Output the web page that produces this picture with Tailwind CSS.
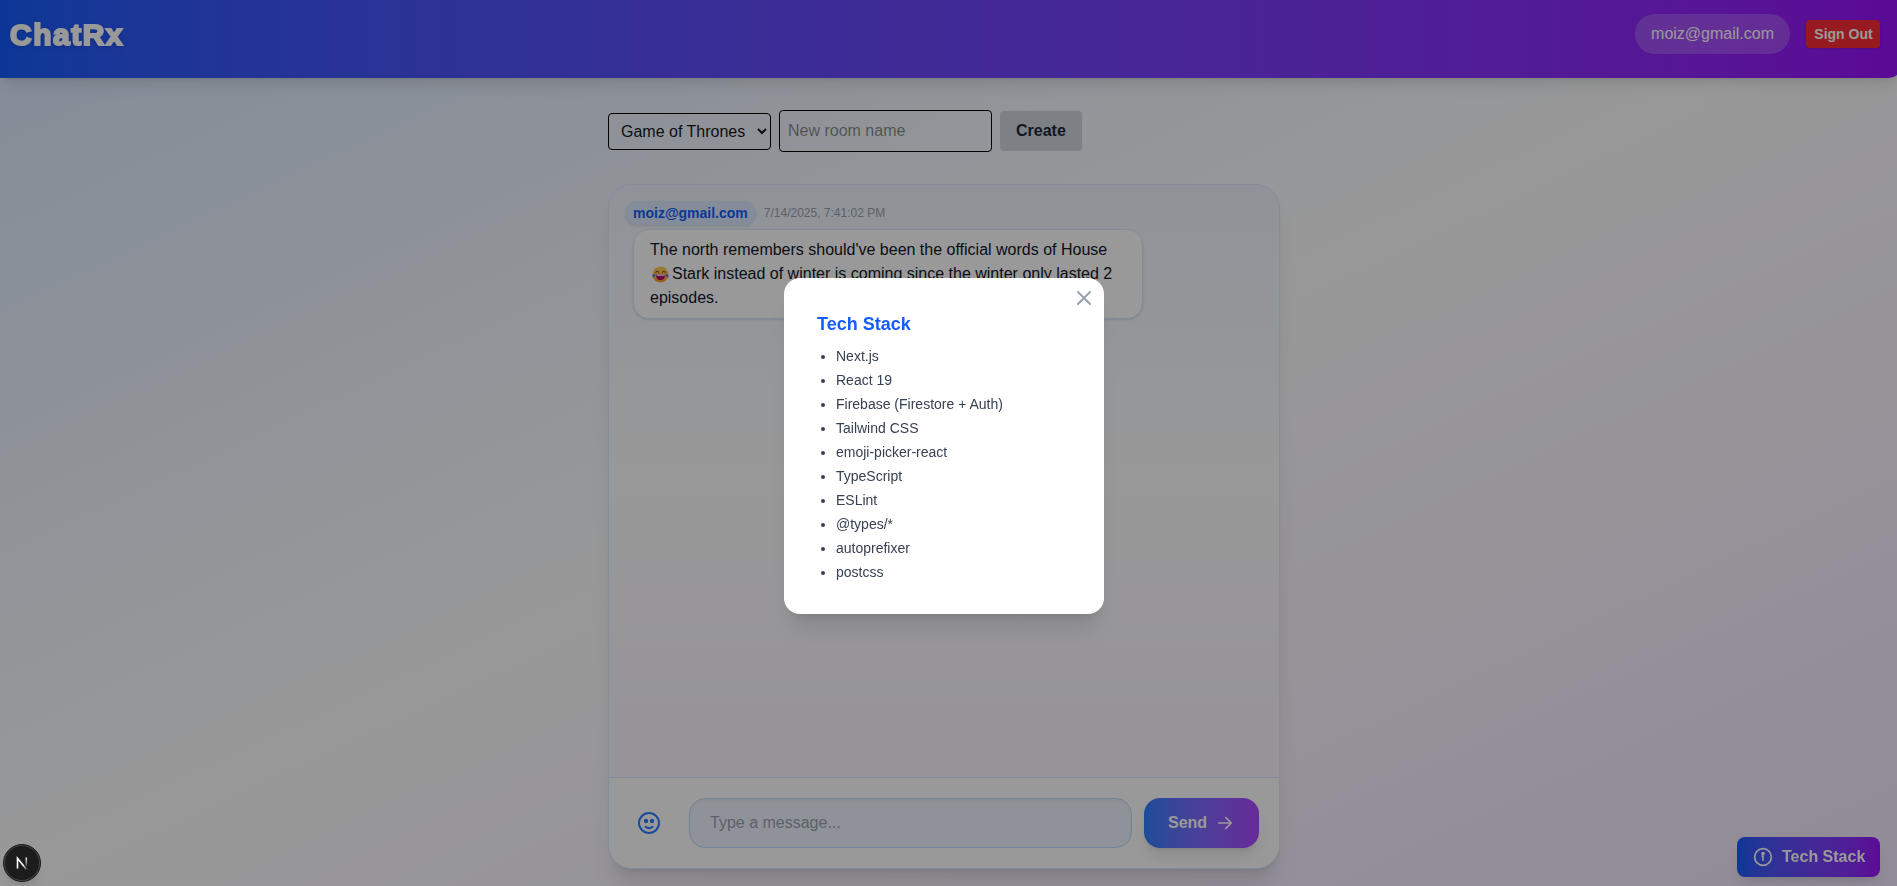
<!DOCTYPE html>
<html lang="en">
<head>
<meta charset="utf-8">
<title>ChatRx</title>
<script src="https://cdn.jsdelivr.net/npm/@tailwindcss/browser@4"></script>
</head>
<body class="h-screen overflow-hidden bg-linear-to-br from-blue-100 via-white to-purple-100 font-['Liberation_Sans',Arial,sans-serif] text-[#171717]">
<div class="flex h-full flex-col">
  <header class="flex h-[78px] w-[1901px] shrink-0 items-center justify-between rounded-br-xl bg-linear-to-r from-blue-600 to-purple-600 pl-[10px] pr-[21px] pb-[10px] text-white shadow-lg">
    <h1 class="pt-[2px] text-3xl font-black tracking-[1.5px] [-webkit-text-stroke:2px_white] drop-shadow-sm">ChatRx</h1>
    <div class="flex items-center gap-4">
      <span class="rounded-full bg-white/20 px-4 py-2">moiz@gmail.com</span>
      <button class="w-[74px] rounded bg-red-500 py-1 pl-px text-sm font-bold whitespace-nowrap shadow">Sign Out</button>
    </div>
  </header>
  <main class="flex w-[1888px] flex-1 flex-col items-center pt-8">
    <div class="flex h-[42px] w-2xl items-center gap-2">
      <select class="mt-px h-[37px] w-[163px] rounded border border-black px-2"><option>Game of Thrones</option></select>
      <input class="h-[42px] w-[213px] rounded border border-black p-2 placeholder:text-[#171717]/50" placeholder="New room name">
      <button class="h-10 rounded bg-gray-300 px-4 font-bold text-gray-800">Create</button>
    </div>
    <section class="mt-8 flex h-[685px] w-2xl flex-col overflow-hidden rounded-3xl border border-blue-100 bg-white shadow-xl">
      <div class="flex-1 bg-linear-to-b from-blue-50 via-white to-purple-50 p-4">
        <div class="flex items-center gap-2">
          <span class="flex h-6 items-center rounded-full bg-blue-100 px-2 text-sm font-bold text-blue-600 shadow-sm">moiz@gmail.com</span>
          <span class="text-xs text-gray-400">7/14/2025, 7:41:02 PM</span>
        </div>
        <div class="mt-1 ml-2 w-[510px] rounded-2xl border border-blue-100 bg-white px-4 py-2 whitespace-nowrap text-gray-900 shadow-sm">
          <p>The north remembers should've been the official words of House</p>
          <p class="flex items-center"><svg class="mr-[3px] ml-0.5 size-[17px]" viewBox="0 0 18 18"><defs><linearGradient id="face" x1="0" y1="0" x2="0" y2="1"><stop offset="0" stop-color="#ffd45a"/><stop offset="1" stop-color="#ff9b2e"/></linearGradient></defs><circle cx="9" cy="9" r="8.5" fill="url(#face)"/><path d="M3.900 6.500q1.700-2 3.300 0M10.800 6.500q1.700-2 3.300 0" fill="none" stroke="#5b2b1b" stroke-width="1" stroke-linecap="round"/><path d="M4 9h10q-.3 6-5 6t-5-6z" fill="#b00b69"/><path d="M4.500 9h9l-.3 1.200H4.800z" fill="#fff"/><path d="M.3 10.500q.3-2 3-2 .3 2.800-1.400 3.200T.3 10.500zM17.700 10.500q-.3-2-3-2-.3 2.800 1.400 3.200t1.600-1.200z" fill="#3c7df0"/></svg>Stark instead of winter is coming since the winter only lasted 2</p>
          <p>episodes.</p>
        </div>
      </div>
      <form class="flex h-[91px] items-center border-t border-blue-100 bg-white pr-5 pl-7">
        <svg class="size-6 text-blue-500" viewBox="0 0 24 24" fill="none" stroke="currentColor" stroke-width="2" stroke-linecap="round"><circle cx="12" cy="12" r="10"/><path d="M8.500 15.700q3.500 2.800 7 0"/><circle cx="9" cy="10" r="1.200" fill="currentColor"/><circle cx="15" cy="10" r="1.200" fill="currentColor"/></svg>
        <input class="ml-7 h-[50px] w-[443px] rounded-2xl border border-blue-200 bg-blue-50 px-5 shadow-inner placeholder:text-gray-400" placeholder="Type a message...">
        <button type="button" class="ml-auto flex h-[50px] w-[115px] items-center gap-2 rounded-2xl bg-linear-to-r from-blue-500 to-purple-500 pl-6 font-bold text-white shadow-lg">Send
          <svg class="size-5" viewBox="0 0 24 24" fill="none" stroke="currentColor" stroke-width="2" stroke-linecap="round" stroke-linejoin="round"><path d="M4.500 12h15M13 5.500l6.500 6.500-6.500 6.500"/></svg>
        </button>
      </form>
    </section>
  </main>
</div>

<button class="fixed top-[837px] right-[17px] flex h-10 w-[143px] items-center gap-[9px] rounded-lg bg-linear-to-r from-blue-600 to-purple-600 pl-4 font-bold whitespace-nowrap text-white shadow-lg">
  <svg class="size-5" viewBox="0 0 24 24" fill="none" stroke="currentColor" stroke-width="2" stroke-linecap="round" stroke-linejoin="round"><circle cx="12" cy="12" r="10"/><path d="M12 16v-5h-1"/><circle cx="12" cy="8" r="1.200" fill="currentColor"/></svg>Tech Stack
</button>

<div class="fixed inset-0 bg-black/40"></div>

<div class="fixed top-[278px] left-[784px] h-[336px] w-80 rounded-2xl bg-white p-8 shadow-xl">
  <svg class="absolute top-2 right-2 size-6 text-gray-400" viewBox="0 0 24 24" fill="none" stroke="currentColor" stroke-width="2" stroke-linecap="round"><path d="M6 6l12 12M18 6L6 18"/></svg>
  <h2 class="mb-2 pl-px text-lg leading-7 font-bold text-blue-600">Tech Stack</h2>
  <ul class="list-disc space-y-1 pl-5 text-sm text-gray-700">
    <li>Next.js</li><li>React 19</li><li>Firebase (Firestore + Auth)</li><li>Tailwind CSS</li><li>emoji-picker-react</li><li>TypeScript</li><li>ESLint</li><li>@types/*</li><li>autoprefixer</li><li>postcss</li>
  </ul>
</div>

<div class="fixed top-[844px] left-[3px] flex size-[38px] items-center justify-center rounded-full border border-[#1c1c1c] bg-[#1c1c1c] shadow-lg">
  <div class="flex size-9 items-center justify-center rounded-full border border-[#444]">
    <svg class="size-4" viewBox="0 0 16 16" fill="none" stroke-width="1.600"><defs><linearGradient id="diag" x1="0" y1="0" x2="1" y2="1"><stop offset=".6" stop-color="#fff"/><stop offset="1" stop-color="#fff" stop-opacity=".2"/></linearGradient><linearGradient id="stem" gradientUnits="userSpaceOnUse" x1="0" y1="2" x2="0" y2="12"><stop offset="0" stop-color="#fff"/><stop offset="1" stop-color="#fff" stop-opacity=".1"/></linearGradient></defs><path d="M3.500 13.500V3.200L12.500 14.500" stroke="url(#diag)"/><path d="M12.300 2.500v9" stroke="url(#stem)"/></svg>
  </div>
</div>
</body>
</html>
